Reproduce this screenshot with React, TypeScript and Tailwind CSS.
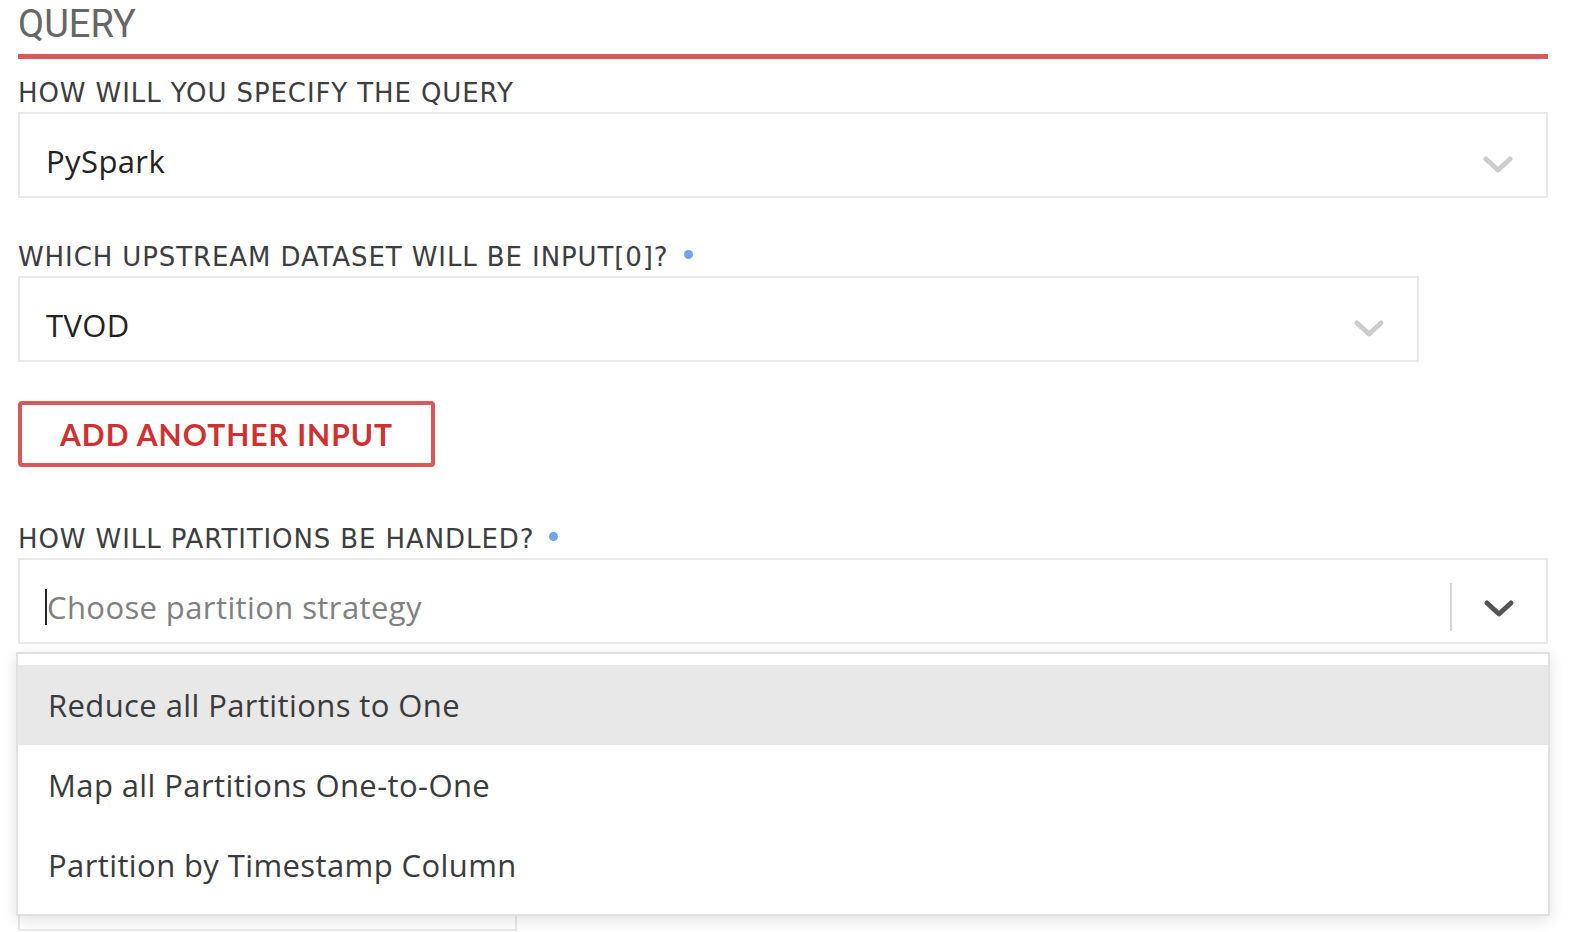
import React from "react";

function Chevron({ dark }: { dark?: boolean }) {
  return (
    <svg width="32" height="20" viewBox="0 0 32 20" className="shrink-0">
      <path
        d="M4 4 L16 15 L28 4"
        fill="none"
        stroke={dark ? "#555555" : "#cccccc"}
        strokeWidth="5"
        strokeLinecap="round"
        strokeLinejoin="round"
      />
    </svg>
  );
}

function Label({ children, dot }: { children: React.ReactNode; dot?: boolean }) {
  return (
    <div className="flex items-center gap-[15px] h-[34px] text-[26px] leading-none text-[#3d3d3f] tracking-[0.9px] font-['DejaVu_Sans',sans-serif]">
      <span>{children}</span>
      {dot && <span className="w-[9px] h-[9px] rounded-full bg-[#6fa8e0] -translate-y-[3px]" />}
    </div>
  );
}

function Select({ value, width }: { value: string; width?: string }) {
  return (
    <div
      className={`flex items-center justify-between h-[86px] pt-[12px] border-2 border-[#e8e8e8] bg-white pl-[26px] pr-[32px] ${width ?? "w-full"}`}
    >
      <span className="text-[31px] text-[#222] tracking-[0.4px] font-['Open_Sans',sans-serif]">{value}</span>
      <span className="translate-y-[4px]">
        <Chevron />
      </span>
    </div>
  );
}

const options = [
  "Reduce all Partitions to One",
  "Map all Partitions One-to-One",
  "Partition by Timestamp Column",
];

export default function App() {
  return (
    <div className="w-[1572px] h-[932px] overflow-hidden bg-white">
      <div className="pl-[18px] pr-[24px]">
        <div className="h-[54px] pt-[2px] text-[38px] leading-[44px] text-[#666] font-['Roboto',sans-serif]">QUERY</div>
        <div className="h-[5px] bg-[#d9595a]" />

        <div className="pt-[17px]">
          <Label>HOW WILL YOU SPECIFY THE QUERY</Label>
          <div className="pt-[2px]">
            <Select value="PySpark" />
          </div>
        </div>

        <div className="pt-[42px]">
          <Label dot>WHICH UPSTREAM DATASET WILL BE INPUT[0]?</Label>
          <div className="pt-[2px]">
            <Select value="TVOD" width="w-[1401px]" />
          </div>
        </div>

        <div className="pt-[39px]">
          <button className="w-[417px] h-[66px] border-[4px] border-[#d9595a] rounded-[4px] bg-white text-[30px] font-bold text-[#d0302f] font-['Lato',sans-serif] tracking-[1px]">
            ADD ANOTHER INPUT
          </button>
        </div>

        <div className="pt-[55px]">
          <Label dot>HOW WILL PARTITIONS BE HANDLED?</Label>
          <div className="relative pt-[2px]">
            <div className="flex items-center h-[86px] pt-[12px] border-2 border-[#e8e8e8] bg-white pl-[25px]">
              <span className="w-[2px] h-[36px] bg-[#222]" />
              <span className="flex-1 text-[31px] text-[#808080] tracking-[0.4px] font-['Open_Sans',sans-serif]">Choose partition strategy</span>
              <span className="w-[2px] h-[48px] bg-[#d6d6d6]" />
              <div className="w-[94px] flex justify-center translate-y-[2px]">
                <Chevron dark />
              </div>
            </div>

            <div className="absolute left-[-2px] right-[-2px] top-[96px] z-10 border-2 border-[#e0e0e0] bg-white pt-[11px] pb-[9px] shadow-[0_4px_14px_rgba(0,0,0,0.12)]">
              {options.map((o, i) => (
                <div
                  key={o}
                  className={`h-[80px] flex items-center pl-[30px] text-[31px] text-[#3a3a3c] tracking-[0.4px] font-['Open_Sans',sans-serif] ${i === 0 ? "bg-[#e8e8e8]" : ""}`}
                >
                  {o}
                </div>
              ))}
            </div>
          </div>
        </div>

        <div className="pt-[201px]">
          <div className="w-[499px] h-[86px] border-2 border-[#e8e8e8]" />
        </div>
      </div>
    </div>
  );
}
